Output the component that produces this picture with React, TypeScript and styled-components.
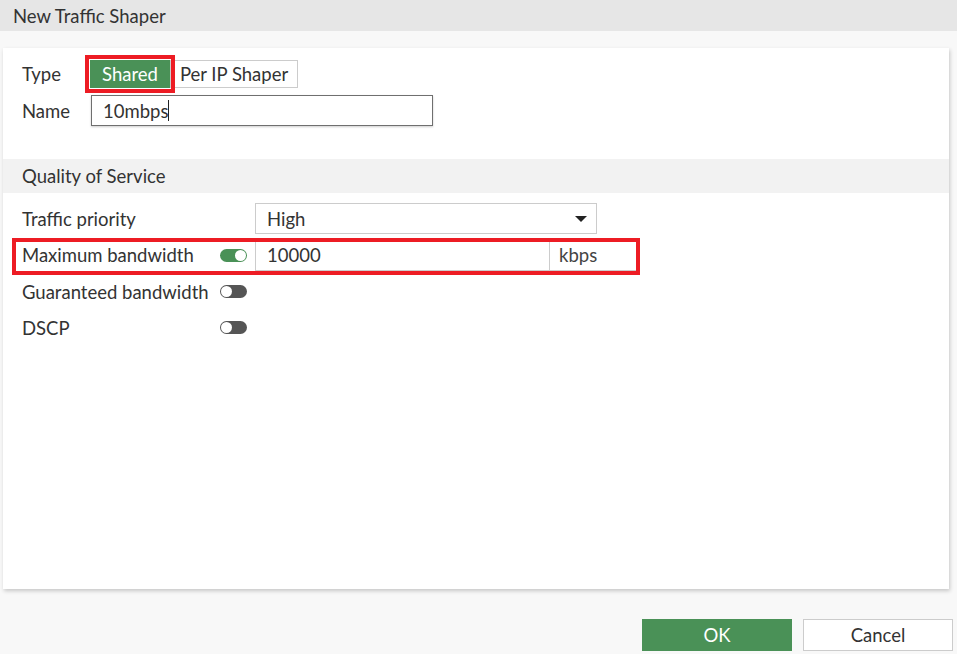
import React from 'react';
import styled, { createGlobalStyle } from 'styled-components';

const GlobalStyle = createGlobalStyle`
    html, body {
        margin: 0;
        padding: 0;
        background: #f8f8f8;
        font-family: Lato, "Open Sans", "Liberation Sans", sans-serif;
        color: #333;
    }
`;

const Page = styled.div`
    width: 957px;
    height: 654px;
    display: flex;
    flex-direction: column;
    background: #f8f8f8;
    overflow: hidden;
`;

const TitleBar = styled.div`
    height: 31px;
    display: flex;
    align-items: center;
    padding-left: 13px;
    background: #e6e6e6;
    font-size: 18.5px;
    color: #333;
`;

const Body = styled.div`
    display: flex;
    flex-direction: column;
    padding: 17px 0 0 3px;
`;

const Card = styled.div`
    height: 541px;
    margin-right: 8px;
    background: #fff;
    box-shadow: 1px 2px 4px rgba(0, 0, 0, 0.2);
    display: flex;
    flex-direction: column;
`;

const TopForm = styled.div`
    display: flex;
    flex-direction: column;
    gap: 7px;
    padding: 12px 0 0 19px;
`;

const Row = styled.div<{ $label: number; $h?: number }>`
    display: grid;
    grid-template-columns: ${(p) => p.$label}px auto;
    align-items: center;
    height: ${(p) => p.$h ?? 31}px;
    font-size: 18.5px;
`;

const Label = styled.div<{ $lift?: number }>`
    display: flex;
    align-items: center;
    justify-content: space-between;
    padding-right: 8px;
    margin-top: ${(p) => -(p.$lift ?? 0)}px;
    color: #333;
    white-space: nowrap;
`;

const Segments = styled.div`
    display: flex;
    align-items: stretch;
    height: 28px;
`;

const Segment = styled.div<{ $active?: boolean }>`
    display: flex;
    align-items: center;
    padding: 0 ${(p) => (p.$active ? 11 : 9)}px;
    font-size: 18.5px;
    background: ${(p) => (p.$active ? '#4a9157' : '#fff')};
    color: ${(p) => (p.$active ? '#fff' : '#333')};
    border: 1px solid ${(p) => (p.$active ? '#4a9157' : '#ccc')};
    ${(p) => p.$active && 'outline: 4px solid #ed1c24; outline-offset: 1px; position: relative; z-index: 1;'}
`;

const TextBox = styled.div<{ $w: number }>`
    width: ${(p) => p.$w}px;
    height: 31px;
    box-sizing: border-box;
    border: 1px solid #6f6f6f;
    box-shadow: 0 1px 2px rgba(0, 0, 0, 0.2);
    display: flex;
    align-items: center;
    padding-left: 11px;
    font-size: 18.5px;
    color: #333;
`;

const Caret = styled.span`
    display: inline-block;
    width: 1px;
    height: 21px;
    background: #222;
`;

const SectionHeader = styled.div`
    margin-top: 33px;
    height: 34px;
    background: #f2f2f2;
    display: flex;
    align-items: center;
    padding-left: 19px;
    font-size: 18.5px;
    color: #333;
`;

const QosForm = styled.div`
    display: flex;
    flex-direction: column;
    padding: 10px 0 0 19px;
    gap: 5px;
`;

const Select = styled.div`
    width: 342px;
    height: 31px;
    box-sizing: border-box;
    border: 1px solid #ccc;
    display: flex;
    align-items: center;
    justify-content: space-between;
    padding: 0 9px 0 11px;
    font-size: 18.5px;
    color: #333;
`;

const Arrow = styled.span`
    width: 0;
    height: 0;
    border-left: 6px solid transparent;
    border-right: 6px solid transparent;
    border-top: 6px solid #222;
`;

const Highlight = styled.div`
    outline: 4px solid #ed1c24;
    outline-offset: 0;
    margin: 3px 0 0 -6px;
    padding: 0 0 0 6px;
    width: 614px;
`;

const InputGroup = styled.div`
    display: flex;
    width: 382px;
    height: 32px;
    margin-top: -3px;
    box-sizing: border-box;
    border: 1px solid #ccc;
    font-size: 18.5px;
`;

const GroupInput = styled.div`
    flex: 1;
    display: flex;
    align-items: center;
    padding-left: 11px;
    color: #333;
`;

const Addon = styled.div`
    width: 87px;
    box-sizing: border-box;
    display: flex;
    align-items: center;
    padding-left: 9px;
    border-left: 1px solid #ccc;
    color: #444;
`;

const Toggle = styled.span<{ $on?: boolean }>`
    width: 27px;
    height: 13px;
    border-radius: 7px;
    background: ${(p) => (p.$on ? '#4a9157' : '#555')};
    display: flex;
    align-items: center;
    justify-content: ${(p) => (p.$on ? 'flex-end' : 'flex-start')};
    padding: 0 1px;
    box-sizing: border-box;
    flex-shrink: 0;

    &::after {
        content: '';
        width: 11px;
        height: 11px;
        border-radius: 50%;
        background: #fff;
    }
`;

const Footer = styled.div`
    display: flex;
    justify-content: flex-end;
    gap: 11px;
    padding: 30px 4px 0 0;
`;

const Button = styled.div<{ $primary?: boolean }>`
    width: 150px;
    height: 32px;
    box-sizing: border-box;
    display: flex;
    align-items: center;
    justify-content: center;
    font-size: 18.5px;
    background: ${(p) => (p.$primary ? '#4a9157' : '#fff')};
    color: ${(p) => (p.$primary ? '#fff' : '#333')};
    border: 1px solid ${(p) => (p.$primary ? '#4a9157' : '#ccc')};
`;

const App = () => {
    return (
        <Page>
            <GlobalStyle />
            <TitleBar>New Traffic Shaper</TitleBar>
            <Body>
                <Card>
                    <TopForm>
                        <Row $label={68} $h={28}>
                            <Label>Type</Label>
                            <Segments>
                                <Segment $active>Shared</Segment>
                                <Segment>Per IP Shaper</Segment>
                            </Segments>
                        </Row>
                        <Row $label={69}>
                            <Label>Name</Label>
                            <TextBox $w={342}>
                                10mbps
                                <Caret />
                            </TextBox>
                        </Row>
                    </TopForm>
                    <SectionHeader>Quality of Service</SectionHeader>
                    <QosForm>
                        <Row $label={233}>
                            <Label>Traffic priority</Label>
                            <Select>
                                High
                                <Arrow />
                            </Select>
                        </Row>
                        <Highlight>
                            <Row $label={233} $h={29}>
                                <Label $lift={3}>
                                    Maximum bandwidth
                                    <Toggle $on />
                                </Label>
                                <InputGroup>
                                    <GroupInput>10000</GroupInput>
                                    <Addon>kbps</Addon>
                                </InputGroup>
                            </Row>
                        </Highlight>
                        <Row $label={233}>
                            <Label>
                                Guaranteed bandwidth
                                <Toggle />
                            </Label>
                        </Row>
                        <Row $label={233}>
                            <Label>
                                DSCP
                                <Toggle />
                            </Label>
                        </Row>
                    </QosForm>
                </Card>
                <Footer>
                    <Button $primary>OK</Button>
                    <Button>Cancel</Button>
                </Footer>
            </Body>
        </Page>
    );
};

export default App;
